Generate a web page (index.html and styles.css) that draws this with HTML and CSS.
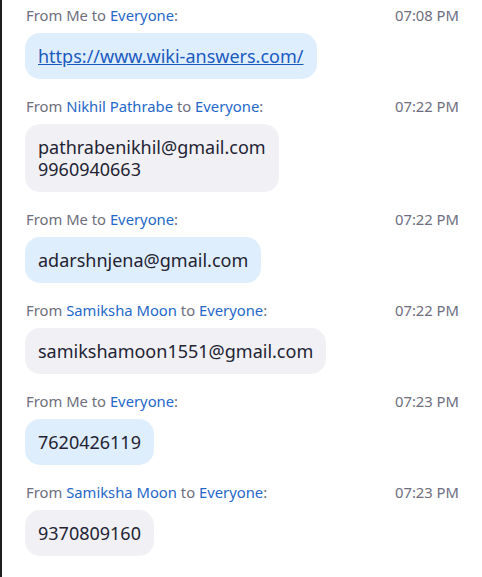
FILE: index.html
```html
<!DOCTYPE html>
<html>
<head>
<meta charset="utf-8">
<link rel="stylesheet" href="styles.css">
</head>
<body>
<div class="chat">
  <div class="msg">
    <div class="meta"><span class="from">From Me to <span class="name">Everyone</span>:</span><span class="time">07:08 PM</span></div>
    <div class="bubble me"><a class="link" href="#">https://www.wiki-answers.com/</a></div>
  </div>
  <div class="msg">
    <div class="meta"><span class="from">From <span class="name">Nikhil Pathrabe</span> to <span class="name">Everyone</span>:</span><span class="time">07:22 PM</span></div>
    <div class="bubble other">pathrabenikhil@gmail.com<br>9960940663</div>
  </div>
  <div class="msg">
    <div class="meta"><span class="from">From Me to <span class="name">Everyone</span>:</span><span class="time">07:22 PM</span></div>
    <div class="bubble me">adarshnjena@gmail.com</div>
  </div>
  <div class="msg">
    <div class="meta"><span class="from">From <span class="name">Samiksha Moon</span> to <span class="name">Everyone</span>:</span><span class="time">07:22 PM</span></div>
    <div class="bubble other">samikshamoon1551@gmail.com</div>
  </div>
  <div class="msg">
    <div class="meta"><span class="from">From Me to <span class="name">Everyone</span>:</span><span class="time">07:23 PM</span></div>
    <div class="bubble me">7620426119</div>
  </div>
  <div class="msg">
    <div class="meta"><span class="from">From <span class="name">Samiksha Moon</span> to <span class="name">Everyone</span>:</span><span class="time">07:23 PM</span></div>
    <div class="bubble other">9370809160</div>
  </div>
</div>
</body>
</html>
```

FILE: styles.css
```css
html, body {
  margin: 0;
  padding: 0;
  background: #ffffff;
}
body {
  font-family: "Noto Sans", "Open Sans", sans-serif;
}
.chat {
  box-sizing: border-box;
  min-height: 100vh;
  border-left: 2px solid #1e1e1e;
  padding: 5px 23px 0 23px;
  display: flex;
  flex-direction: column;
  gap: 17px;
}
.msg {
  display: flex;
  flex-direction: column;
  align-items: flex-start;
  gap: 8px;
}
.meta {
  align-self: stretch;
  display: flex;
  justify-content: space-between;
  font-size: 14.8px;
  line-height: 20px;
  color: #6e6e7e;
  padding-left: 1px;
}
.name {
  color: #2568c9;
}
.time {
  color: #6e6e7e;
}
.bubble {
  font-size: 18px;
  line-height: 22px;
  padding: 12px 13px;
  border-radius: 15px;
  color: #232333;
}
.me {
  background: #dfeefd;
}
.other {
  background: #f1f1f5;
}
.link {
  color: #1a5bbf;
  text-decoration: underline;
}
```
